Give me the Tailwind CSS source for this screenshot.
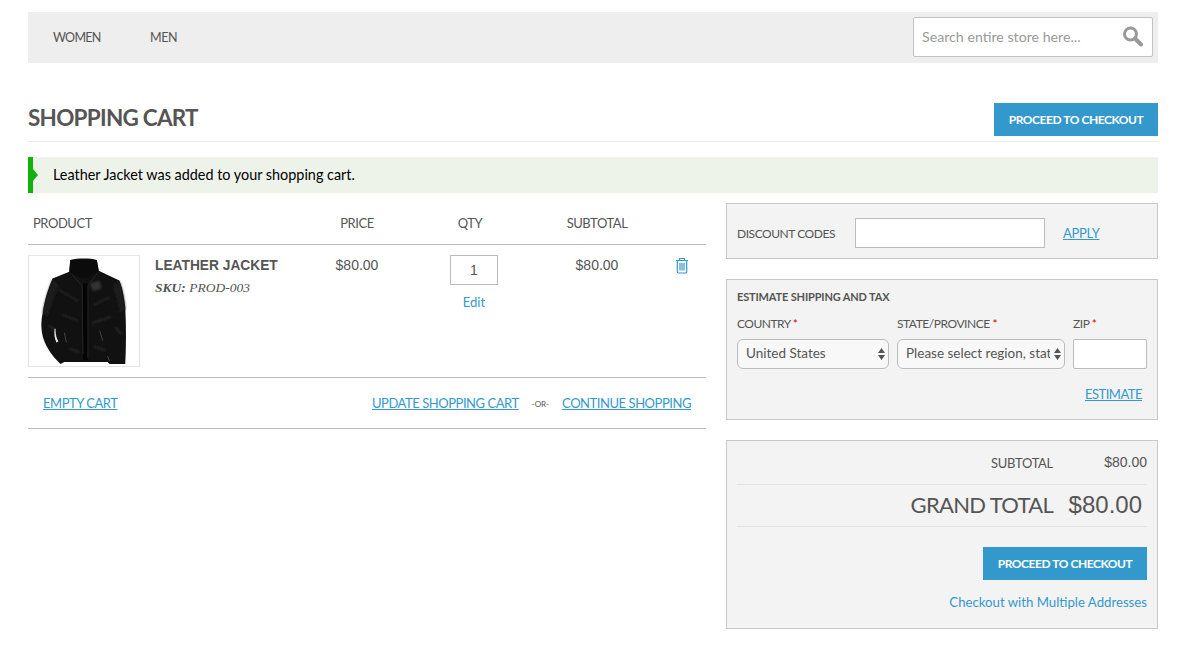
<!DOCTYPE html>
<html lang="en">
<head>
    <meta charset="UTF-8">
    <title>Shopping Cart</title>
    <script src="https://cdn.jsdelivr.net/npm/@tailwindcss/browser@4"></script>
</head>
<body class="bg-white font-['Lato','Noto_Sans',sans-serif] text-[#555] text-[14px]">
    <div class="px-[28px] pt-[12px] w-[1186px]">
        <!-- nav -->
        <nav class="h-[51px] bg-[#eeeeee] flex items-center pl-[25px] pr-[5px]">
            <a class="text-[12.5px] tracking-[-0.7px] w-[97px] mt-[2px]">WOMEN</a>
            <a class="text-[12.5px] tracking-[-0.4px] mt-[2px]">MEN</a>
            <div class="ml-auto mb-[2px] relative w-[240px] h-[40px]">
                <input class="w-full h-full bg-white border border-[#c2c2c2] rounded-[2px] pl-[8px] text-[14.2px] placeholder:text-[#999]" placeholder="Search entire store here...">
                <svg class="absolute right-[10px] top-[9px]" width="21" height="21" viewBox="0 0 21 21" fill="none" stroke="#999"><circle cx="8.5" cy="8" r="6" stroke-width="3"/><path d="M13 12.5l6 6" stroke-width="4" stroke-linecap="round"/></svg>
            </div>
        </nav>

        <!-- title -->
        <div class="mt-[40px] h-[39px] border-b border-[#eaeaea] flex justify-between">
            <h1 class="text-[22.5px] tracking-[-0.75px] font-bold leading-[28px] mt-[1px]">SHOPPING CART</h1>
            <a class="w-[164px] h-[33px] bg-[#3399cc] text-white text-[12px] tracking-[-0.45px] font-bold flex items-center justify-center">PROCEED TO CHECKOUT</a>
        </div>

        <!-- message -->
        <div class="mt-[15px] h-[36px] bg-[#eef3ea] relative flex items-center pl-[25px] text-black text-[14.4px]">
            <div class="absolute left-0 top-0 h-full w-[5px] bg-[#0fb40a]"></div>
            <div class="absolute left-[5px] top-[12px] border-l-[5px] border-l-[#0fb40a] border-y-[6px] border-y-transparent"></div>
            Leather Jacket was added to your shopping cart.
        </div>

        <div class="flex gap-[20px] mt-[10px] items-start">
            <!-- cart table -->
            <div class="w-[678px]">
                <div class="grid grid-cols-[280px_98px_128px_126px_46px] h-[42px] items-center border-b border-[#bbb] text-[13px] tracking-[-0.45px]">
                    <div class="pl-[5px]">PRODUCT</div>
                    <div class="text-center">PRICE</div>
                    <div class="text-center">QTY</div>
                    <div class="text-center">SUBTOTAL</div>
                    <div></div>
                </div>
                <div class="grid grid-cols-[280px_98px_128px_126px_46px] h-[133px] border-b border-[#bbb] pt-[10px] font-['Liberation_Sans',sans-serif] text-[14px]">
                    <div class="flex gap-[15px]">
                        <div class="w-[112px] h-[112px] border border-[#e4e4e4]">
                            <svg width="110" height="110" viewBox="0 0 112 112">
                                <defs><filter id="soft"><feGaussianBlur stdDeviation="0.9"/></filter></defs>
                                <path d="M42 4 C50 2 62 2 69 4 L71 15 L92 25 C95 32 97 42 98 52 C99 72 99 92 98 110 L82 110 L80 108 L36 108 L32 110 C24 102 18 94 15 85 C12 76 12 66 14 58 C16 44 20 32 24 23 L41 16 Z" fill="#111"/>
                                <g filter="url(#soft)">
                                    <path d="M24 24 C20 34 16 46 14 58 L19 62 C23 50 26 38 31 30 Z" fill="#1e1e1e"/>
                                    <path d="M92 26 C95 32 97 44 98 54 L92 58 C90 46 88 36 84 30 Z" fill="#1c1c1c"/>
                                    <path d="M62 28 L72 25 L74 33 L65 36 Z" fill="#333"/>
                                    <path d="M30 34 L50 46 M34 60 L50 66 M66 50 L82 42 M64 68 L84 62 M20 70 L26 76 M88 72 L94 80 M40 94 L52 98 M66 92 L78 96" stroke="#222" stroke-width="2.5" fill="none"/>
                                </g>
                                <path d="M36 78 L38 88 M72 76 L75 86 M80 102 L82 107" stroke="#444" stroke-width="1" fill="none"/>
                                <path d="M55 28 L60 28 L60 106 L55 106 Z" fill="#040404"/>
                                <path d="M43 18 L54 30 L55 100 M71 16 L60 30 L60 104" stroke="#262626" stroke-width="1" fill="none"/>
                                <path d="M27 74 C27 80 28 84 30 87 L28 88 C26 84 25.5 80 26 74 Z" fill="#e8e8e8"/>
                                <path d="M42 4 L69 4 L71 15 L60 22 L52 22 L41 16 Z" fill="#0b0b0b"/>
                            </svg>
                        </div>
                        <div class="pt-[2px]">
                            <div class="font-bold text-[13.75px] leading-[18px]">LEATHER JACKET</div>
                            <div class="font-['Liberation_Serif',serif] italic text-[13.5px] leading-[18px] mt-[4px] text-[#555]"><b>SKU:</b> PROD-003</div>
                        </div>
                    </div>
                    <div class="text-center leading-[20px]">$80.00</div>
                    <div class="pl-[8px] flex flex-col items-center">
                        <input class="w-[48px] h-[30px] border border-[#bbb] text-center text-[14px] text-[#555]" value="1">
                        <a class="text-[#3399cc] font-['Lato',sans-serif] text-[13px] mt-[8px]">Edit</a>
                    </div>
                    <div class="text-center leading-[20px]">$80.00</div>
                    <div class="flex justify-center pt-[2px] pr-[2px]">
                        <svg width="14" height="17" viewBox="0 0 14 17" fill="none" stroke="#3399cc"><path d="M1 3.5h12M4.5 3.5V1.5h5v2M2.3 3.5v11.3a1.2 1.2 0 0 0 1.2 1.2h7a1.2 1.2 0 0 0 1.2-1.2V3.5M5 6v7.5M7 6v7.5M9 6v7.5" stroke-width="1.2"/></svg>
                    </div>
                </div>
                <div class="h-[51px] border-b border-[#bbb] flex items-center px-[15px] pt-[2px] text-[13px] tracking-[-0.45px]">
                    <a class="text-[#3399cc] underline">EMPTY CART</a>
                    <a class="text-[#3399cc] underline ml-auto">UPDATE SHOPPING CART</a>
                    <span class="text-[8px] tracking-normal mx-[13px]">-OR-</span>
                    <a class="text-[#3399cc] underline">CONTINUE SHOPPING</a>
                </div>
            </div>

            <!-- sidebar -->
            <div class="w-[432px] flex flex-col gap-[20px]">
                <div class="h-[56px] border border-[#c8c8c8] bg-[#f3f3f3] flex items-center pl-[10px] pt-[4px]">
                    <span class="w-[118px] mt-[2px] text-[12px] tracking-[-0.45px]">DISCOUNT CODES</span>
                    <input class="w-[190px] h-[30px] bg-white border border-[#bbb]">
                    <a class="text-[#3399cc] underline mt-[2px] text-[13px] tracking-[-0.3px] ml-[18px]">APPLY</a>
                </div>

                <div class="h-[141px] border border-[#c8c8c8] bg-[#f3f3f3] px-[10px] pt-[10px]">
                    <div class="font-bold text-[11px] tracking-[-0.15px] leading-[14px]">ESTIMATE SHIPPING AND TAX</div>
                    <div class="flex gap-[8px] mt-[11px]">
                        <div class="w-[152px]">
                            <div class="text-[12px] tracking-[-0.5px] leading-[18px]">COUNTRY <span class="text-[#d00]">*</span></div>
                            <div class="relative mt-[6px]">
                                <select class="appearance-none w-full h-[30px] border border-[#bbb] rounded-[6px] bg-[#f8f8f8] pl-[8px] pr-[16px] pb-[2px] text-[13.5px] text-[#555]"><option>United States</option></select>
                                <svg class="absolute right-[4px] top-[8px]" width="7" height="14" viewBox="0 0 7 14" fill="#555"><path d="M3.5 1L7 6H0zM3.5 13L0 8h7z"/></svg>
                            </div>
                        </div>
                        <div class="w-[168px]">
                            <div class="text-[12px] tracking-[-0.45px] leading-[18px]">STATE/PROVINCE <span class="text-[#d00]">*</span></div>
                            <div class="relative mt-[6px]">
                                <select class="appearance-none w-full h-[30px] border border-[#bbb] rounded-[6px] bg-[#f8f8f8] pl-[8px] pr-[14px] pb-[2px] text-[13.5px] text-[#555]"><option>Please select region, state or province</option></select>
                                <svg class="absolute right-[4px] top-[8px]" width="7" height="14" viewBox="0 0 7 14" fill="#555"><path d="M3.5 1L7 6H0zM3.5 13L0 8h7z"/></svg>
                            </div>
                        </div>
                        <div class="w-[74px]">
                            <div class="text-[12px] tracking-[-0.45px] leading-[18px]">ZIP <span class="text-[#d00]">*</span></div>
                            <input class="w-full h-[30px] mt-[6px] bg-white border border-[#bbb] rounded-[2px]">
                        </div>
                    </div>
                    <div class="text-right pr-[5px] mt-[14px]"><a class="text-[#3399cc] underline text-[13px] tracking-[-0.5px]">ESTIMATE</a></div>
                </div>

                <div class="h-[189px] border border-[#c8c8c8] bg-[#f3f3f3] px-[10px]">
                    <div class="h-[44px] border-b border-[#e2e2e2] flex justify-end items-center">
                        <span class="text-[13px] tracking-[-0.3px] mt-[2px]">SUBTOTAL</span>
                        <span class="w-[94px] text-right font-['Liberation_Sans',sans-serif]">$80.00</span>
                    </div>
                    <div class="h-[42px] border-b border-[#e2e2e2] flex justify-end items-center pr-[5px] pb-[2px]">
                        <span class="text-[22px] tracking-[-0.7px]">GRAND TOTAL</span>
                        <span class="w-[89px] text-right text-[24px] font-['Liberation_Sans',sans-serif]">$80.00</span>
                    </div>
                    <div class="flex flex-col items-end">
                        <a class="w-[164px] h-[33px] mt-[20px] bg-[#3399cc] text-white text-[12px] tracking-[-0.45px] font-bold flex items-center justify-center">PROCEED TO CHECKOUT</a>
                        <a class="text-[#3399cc] text-[13.2px] mt-[13px]">Checkout with Multiple Addresses</a>
                    </div>
                </div>
            </div>
        </div>
    </div>
</body>
</html>
